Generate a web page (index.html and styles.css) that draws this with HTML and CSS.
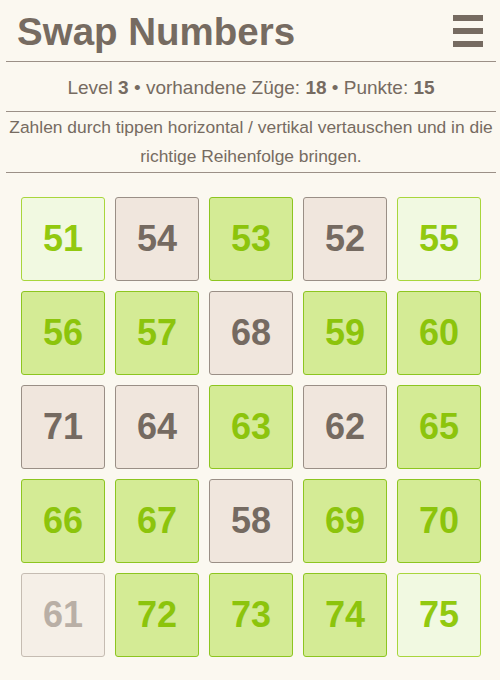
FILE: index.html
```html
<!DOCTYPE html>
<html>
<head>
<meta charset="utf-8">
<link rel="stylesheet" href="styles.css">
</head>
<body>
<div class="page">
  <header class="header">
    <h1 class="title">Swap Numbers</h1>
    <div class="menu" aria-label="Menü"><span></span><span></span><span></span></div>
  </header>
  <div class="status">Level <b>3</b> • vorhandene Züge: <b>18</b> • Punkte: <b>15</b></div>
  <div class="info">Zahlen durch tippen horizontal / vertikal vertauschen und in die richtige Reihenfolge bringen.</div>
  <div class="board">
    <div class="tile light">51</div>
    <div class="tile beige">54</div>
    <div class="tile green">53</div>
    <div class="tile beige">52</div>
    <div class="tile light">55</div>
    <div class="tile green">56</div>
    <div class="tile green">57</div>
    <div class="tile beige">68</div>
    <div class="tile green">59</div>
    <div class="tile green">60</div>
    <div class="tile beige">71</div>
    <div class="tile beige">64</div>
    <div class="tile green">63</div>
    <div class="tile beige">62</div>
    <div class="tile green">65</div>
    <div class="tile green">66</div>
    <div class="tile green">67</div>
    <div class="tile beige">58</div>
    <div class="tile green">69</div>
    <div class="tile green">70</div>
    <div class="tile faded">61</div>
    <div class="tile green">72</div>
    <div class="tile green">73</div>
    <div class="tile green">74</div>
    <div class="tile light">75</div>
  </div>
</div>
</body>
</html>
```

FILE: styles.css
```css
html, body {
  margin: 0;
  padding: 0;
  background: #fbf8f0;
}
body {
  font-family: "Liberation Sans", Arial, sans-serif;
  color: #766b61;
}
.page {
  padding: 0 4px 0 6px;
}
.header {
  display: flex;
  justify-content: space-between;
  align-items: center;
  height: 62px;
  border-bottom: 1px solid #9b9087;
  box-sizing: border-box;
}
.title {
  margin: 0 0 0 11px;
  font-size: 38.5px;
  font-weight: bold;
  line-height: 1;
  color: #766b61;
  position: relative;
  top: 2px;
}
.menu {
  display: flex;
  flex-direction: column;
  gap: 7px;
  width: 30px;
  margin-right: 13px;
  position: relative;
  top: 0;
}
.menu span {
  display: block;
  height: 6px;
  background: #766b61;
}
.status {
  text-align: center;
  font-size: 19px;
  height: 50px;
  line-height: 52px;
  border-bottom: 1px solid #9b9087;
  box-sizing: border-box;
}
.status b {
  font-weight: bold;
}
.info {
  text-align: center;
  font-size: 17.4px;
  line-height: 29px;
  padding: 1px 0 1px;
  border-bottom: 1px solid #9b9087;
}
.board {
  display: grid;
  grid-template-columns: repeat(5, 84px);
  grid-auto-rows: 84px;
  gap: 10px;
  justify-content: center;
  margin: 24px 0 0 0;
}
.tile {
  box-sizing: border-box;
  border: 1px solid;
  border-radius: 3px;
  display: flex;
  align-items: center;
  justify-content: center;
  font-size: 36px;
  font-weight: bold;
}
.light {
  background: #f1f9e1;
  border-color: #a9d63c;
  color: #92c90f;
}
.green {
  background: #d4eb95;
  border-color: #8dc520;
  color: #8cc40c;
}
.beige {
  background: #f0e6dd;
  border-color: #9a8f86;
  color: #756a61;
}
.faded {
  background: #f5efe7;
  border-color: #c5bcb2;
  color: #b9afa6;
}
```
